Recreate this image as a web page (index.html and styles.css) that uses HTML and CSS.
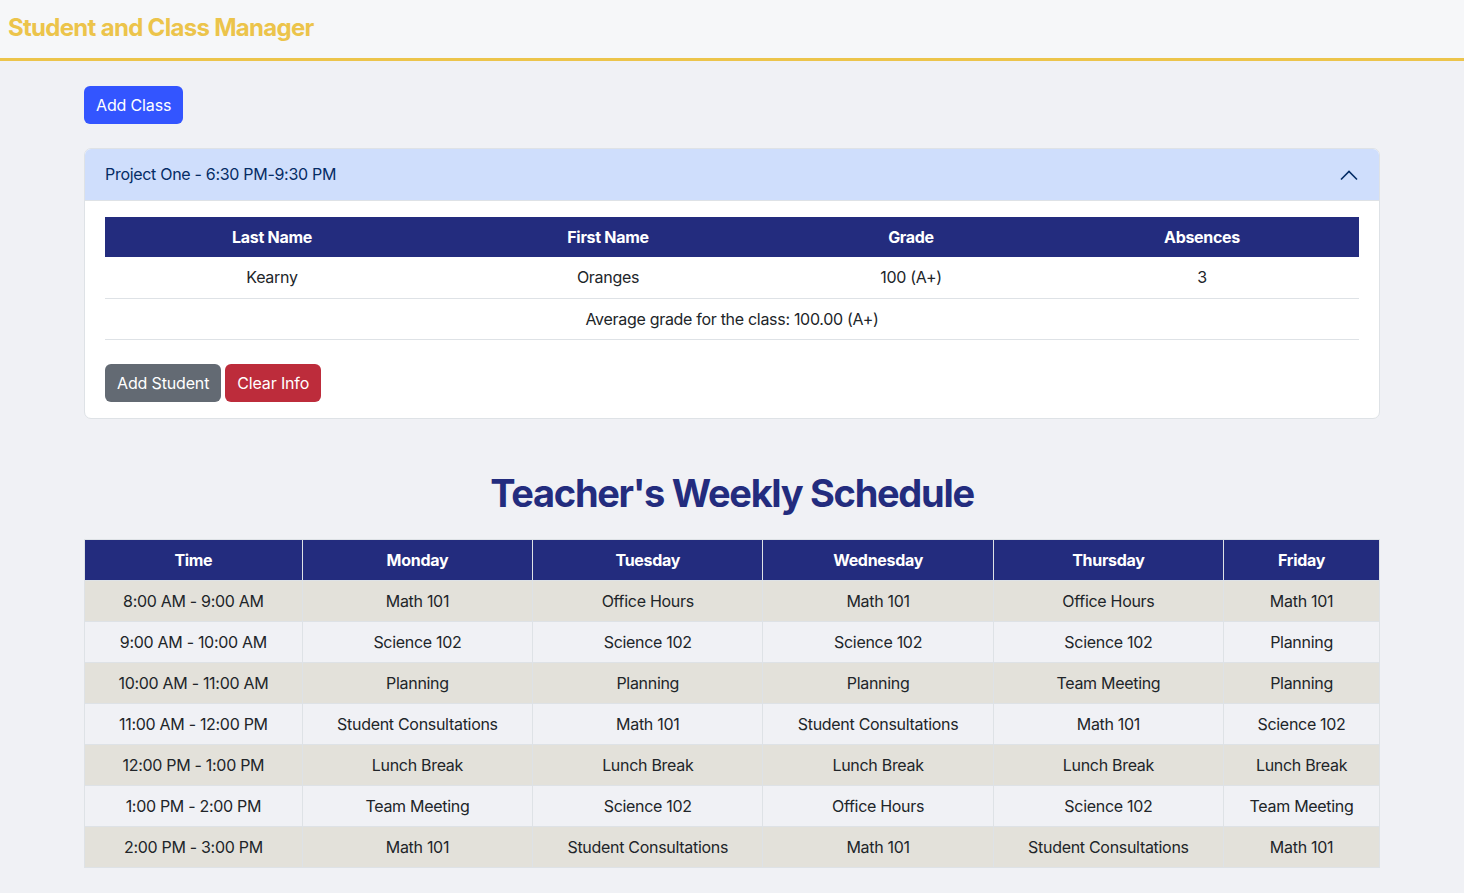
FILE: index.html
```html
<!DOCTYPE html>
<html lang="en">
<head>
<meta charset="utf-8">
<title>Student and Class Manager</title>
<link rel="stylesheet" href="styles.css">
</head>
<body>
<header class="topbar">
  <h1 class="brand">Student and Class Manager</h1>
</header>
<main class="container">
  <button class="btn btn-primary add-class">Add Class</button>

  <section class="card">
    <div class="card-head">
      <span>Project One - 6:30 PM-9:30 PM</span>
      <svg class="chev" width="18" height="12" viewBox="0 0 18 12"><polyline points="1,10.5 9,2.5 17,10.5" fill="none" stroke="#052c65" stroke-width="1.6"/></svg>
    </div>
    <div class="card-body">
      <table class="students">
        <colgroup><col class="c1"><col class="c2"><col class="c3"><col class="c4"></colgroup>
        <thead>
          <tr><th>Last Name</th><th>First Name</th><th>Grade</th><th>Absences</th></tr>
        </thead>
        <tbody>
          <tr><td>Kearny</td><td>Oranges</td><td>100 (A+)</td><td>3</td></tr>
          <tr><td colspan="4">Average grade for the class: 100.00 (A+)</td></tr>
        </tbody>
      </table>
      <div class="actions">
        <button class="btn btn-secondary">Add Student</button>
        <button class="btn btn-danger">Clear Info</button>
      </div>
    </div>
  </section>

  <h2 class="sched-title">Teacher's Weekly Schedule</h2>

  <table class="schedule">
    <colgroup><col class="s0"><col class="s1"><col class="s1"><col class="s1"><col class="s1"><col class="s5"></colgroup>
    <thead>
      <tr><th>Time</th><th>Monday</th><th>Tuesday</th><th>Wednesday</th><th>Thursday</th><th>Friday</th></tr>
    </thead>
    <tbody>
      <tr><td>8:00 AM - 9:00 AM</td><td>Math 101</td><td>Office Hours</td><td>Math 101</td><td>Office Hours</td><td>Math 101</td></tr>
      <tr><td>9:00 AM - 10:00 AM</td><td>Science 102</td><td>Science 102</td><td>Science 102</td><td>Science 102</td><td>Planning</td></tr>
      <tr><td>10:00 AM - 11:00 AM</td><td>Planning</td><td>Planning</td><td>Planning</td><td>Team Meeting</td><td>Planning</td></tr>
      <tr><td>11:00 AM - 12:00 PM</td><td>Student Consultations</td><td>Math 101</td><td>Student Consultations</td><td>Math 101</td><td>Science 102</td></tr>
      <tr><td>12:00 PM - 1:00 PM</td><td>Lunch Break</td><td>Lunch Break</td><td>Lunch Break</td><td>Lunch Break</td><td>Lunch Break</td></tr>
      <tr><td>1:00 PM - 2:00 PM</td><td>Team Meeting</td><td>Science 102</td><td>Office Hours</td><td>Science 102</td><td>Team Meeting</td></tr>
      <tr><td>2:00 PM - 3:00 PM</td><td>Math 101</td><td>Student Consultations</td><td>Math 101</td><td>Student Consultations</td><td>Math 101</td></tr>
    </tbody>
  </table>
</main>
</body>
</html>
```
FILE: styles.css
```css
* { box-sizing: border-box; }
html, body { margin: 0; padding: 0; }
body {
  background: #f0f1f5;
  font-family: Inter, "Noto Sans", "Liberation Sans", sans-serif;
  font-size: 16px;
  line-height: 1.5;
  color: #212529;
  letter-spacing: -0.3px;
}
.topbar {
  background: #f6f7f9;
  height: 61px;
  border-bottom: 3px solid #ecc44b;
  padding: 0 8px;
  display: flex;
  align-items: center;
}
.brand {
  margin: 0;
  font-size: 24px;
  font-weight: 700;
  color: #ecc44b;
  line-height: 1;
  letter-spacing: -0.7px;
  position: relative;
  top: -1px;
}
.container {
  width: 1320px;
  margin: 0 auto;
  padding: 25px 12px 20px;
}
.btn {
  display: inline-block;
  font-family: inherit;
  font-size: 16px;
  letter-spacing: -0.15px;
  line-height: 24px;
  padding: 7px 12px;
  border: 0;
  border-radius: 6px;
  color: #fff;
  cursor: pointer;
}
.btn-primary { background: #3355ff; }
.btn-secondary { background: #636a73; }
.btn-danger { background: #bd2c3b; }
.add-class { display: block; height: 38px; }
.card {
  margin-top: 24px;
  background: #fff;
  border: 1px solid #dee2e6;
  border-radius: 7px;
  overflow: hidden;
}
.card-head {
  background: #cfdefc;
  color: #052c65;
  height: 52px;
  padding: 0 20px;
  display: flex;
  align-items: center;
  justify-content: space-between;
  border-bottom: 1px solid #dee2e6;
}
.card-head span { position: relative; top: -1px; }
.chev { margin-right: 1px; }
.card-body { padding: 16px 20px 16px; }
table { border-collapse: collapse; width: 100%; }
.students col.c1 { width: 334px; }
.students col.c2 { width: 338px; }
.students col.c3 { width: 268px; }
.students col.c4 { width: 314px; }
th {
  background: #232c7e;
  color: #fff;
  font-weight: 700;
  height: 40px;
  padding: 8px;
  text-align: center;
}
td {
  text-align: center;
  padding: 8px;
  height: 41px;
}
.students td { border-bottom: 1px solid #dee2e6; background: #fff; }
.actions { margin-top: 24px; display: flex; gap: 4px; }
.actions .btn { height: 38px; }
.sched-title {
  margin: 50px 0 22px;
  text-align: center;
  font-size: 38px;
  font-weight: 700;
  line-height: 48px;
  color: #232c7e;
  letter-spacing: -1.3px;
}
.schedule { border: 1px solid #dee2e6; }
.schedule col.s0 { width: 218px; }
.schedule col.s1 { width: 230.5px; }
.schedule col.s5 { width: 156px; }
.schedule th { border-left: 1px solid #dee2e6; }
.schedule th:first-child { border-left: 0; }
.schedule td { border: 1px solid #dee2e6; }
.schedule tbody tr:nth-child(odd) td { background: #e3e1da; }
.schedule tbody tr:nth-child(even) td { background: #f0f1f5; }
```
